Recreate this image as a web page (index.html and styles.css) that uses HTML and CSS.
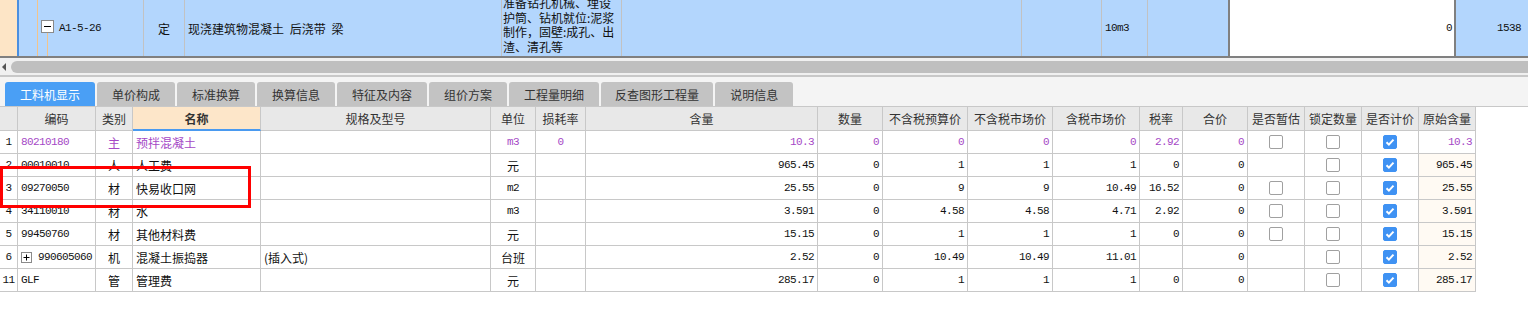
FILE: index.html
```html
<!DOCTYPE html>
<html lang="zh-CN">
<head>
<meta charset="utf-8">
<title>工料机显示</title>
<link rel="stylesheet" href="styles.css">
</head>
<body>
<div class="toprow">
  <div class="gutter"></div>
  <div class="tcell tcode">
    <span class="tree"><svg class="tbox" width="13" height="13" viewBox="0 0 13 13"><rect x="0.5" y="0.5" width="12" height="12" fill="#fff" stroke="#8a8a8a"/><path d="M3 6.5h7" stroke="#000"/></svg></span>
    <span class="mono">A1-5-26</span>
  </div>
  <div class="tcell ttype">定</div>
  <div class="tcell tname">现浇建筑物混凝土 后浇带 梁</div>
  <div class="tcell tdesc"><span>准备钻孔机械、埋设<br>护筒、钻机就位:泥浆<br>制作，固壁:成孔、出<br>渣、清孔等</span></div>
  <div class="tcell tblank1"></div>
  <div class="tcell tblank2"></div>
  <div class="tcell tunit mono">10m3</div>
  <div class="tcell tblank3"></div>
  <div class="tcell tedit mono">0</div>
  <div class="tcell tlast mono">1538</div>
</div>
<div class="hscroll">
  <span class="harrow"></span>
  <div class="htrack"></div>
</div>
<div class="tabbar">
  <div class="tab active">工料机显示</div>
  <div class="tab">单价构成</div>
  <div class="tab">标准换算</div>
  <div class="tab">换算信息</div>
  <div class="tab">特征及内容</div>
  <div class="tab">组价方案</div>
  <div class="tab">工程量明细</div>
  <div class="tab tab-long">反查图形工程量</div>
  <div class="tab">说明信息</div>
</div>
<div class="grid">
  <div class="grow ghead">
    <div></div><div>编码</div><div>类别</div><div class="sel">名称</div><div>规格及型号</div><div>单位</div><div>损耗率</div><div>含量</div><div>数量</div><div>不含税预算价</div><div>不含税市场价</div><div>含税市场价</div><div>税率</div><div>合价</div><div>是否暂估</div><div>锁定数量</div><div>是否计价</div><div>原始含量</div>
  </div>
  <div class="grow p">
    <div class="ctr mono num">1</div><div class="l mono">80210180</div><div class="ctr">主</div><div class="l">预拌混凝土</div><div class="l"></div><div class="ctr mono">m3</div><div class="ctr mono">0</div><div class="r mono">10.3</div><div class="r mono">0</div><div class="r mono">0</div><div class="r mono">0</div><div class="r mono">0</div><div class="r mono">2.92</div><div class="r mono">0</div><div class="ctr"><span class="cb"></span></div><div class="ctr"><span class="cb"></span></div><div class="ctr"><span class="cb on"><svg width="14" height="14" viewBox="0 0 14 14"><path d="M3.5 7.2l2.4 2.4 4.6-5" fill="none" stroke="#fff" stroke-width="2"/></svg></span></div><div class="r mono">10.3</div>
  </div>
  <div class="grow">
    <div class="ctr mono num">2</div><div class="l mono">00010010</div><div class="ctr">人</div><div class="l">人工费</div><div class="l"></div><div class="ctr">元</div><div></div><div class="r mono">965.45</div><div class="r mono">0</div><div class="r mono">1</div><div class="r mono">1</div><div class="r mono">1</div><div class="r mono">0</div><div class="r mono">0</div><div></div><div class="ctr"><span class="cb"></span></div><div class="ctr"><span class="cb on"><svg width="14" height="14" viewBox="0 0 14 14"><path d="M3.5 7.2l2.4 2.4 4.6-5" fill="none" stroke="#fff" stroke-width="2"/></svg></span></div><div class="r mono orig">965.45</div>
  </div>
  <div class="grow">
    <div class="ctr mono num">3</div><div class="l mono">09270050</div><div class="ctr">材</div><div class="l">快易收口网</div><div class="l"></div><div class="ctr mono">m2</div><div></div><div class="r mono">25.55</div><div class="r mono">0</div><div class="r mono">9</div><div class="r mono">9</div><div class="r mono">10.49</div><div class="r mono">16.52</div><div class="r mono">0</div><div class="ctr"><span class="cb"></span></div><div class="ctr"><span class="cb"></span></div><div class="ctr"><span class="cb on"><svg width="14" height="14" viewBox="0 0 14 14"><path d="M3.5 7.2l2.4 2.4 4.6-5" fill="none" stroke="#fff" stroke-width="2"/></svg></span></div><div class="r mono orig">25.55</div>
  </div>
  <div class="grow">
    <div class="ctr mono num">4</div><div class="l mono">34110010</div><div class="ctr">材</div><div class="l">水</div><div class="l"></div><div class="ctr mono">m3</div><div></div><div class="r mono">3.591</div><div class="r mono">0</div><div class="r mono">4.58</div><div class="r mono">4.58</div><div class="r mono">4.71</div><div class="r mono">2.92</div><div class="r mono">0</div><div class="ctr"><span class="cb"></span></div><div class="ctr"><span class="cb"></span></div><div class="ctr"><span class="cb on"><svg width="14" height="14" viewBox="0 0 14 14"><path d="M3.5 7.2l2.4 2.4 4.6-5" fill="none" stroke="#fff" stroke-width="2"/></svg></span></div><div class="r mono orig">3.591</div>
  </div>
  <div class="grow">
    <div class="ctr mono num">5</div><div class="l mono">99450760</div><div class="ctr">材</div><div class="l">其他材料费</div><div class="l"></div><div class="ctr">元</div><div></div><div class="r mono">15.15</div><div class="r mono">0</div><div class="r mono">1</div><div class="r mono">1</div><div class="r mono">1</div><div class="r mono">0</div><div class="r mono">0</div><div class="ctr"><span class="cb"></span></div><div class="ctr"><span class="cb"></span></div><div class="ctr"><span class="cb on"><svg width="14" height="14" viewBox="0 0 14 14"><path d="M3.5 7.2l2.4 2.4 4.6-5" fill="none" stroke="#fff" stroke-width="2"/></svg></span></div><div class="r mono orig">15.15</div>
  </div>
  <div class="grow">
    <div class="ctr mono num">6</div><div class="l mono"><svg class="pbox" width="11" height="11" viewBox="0 0 11 11"><rect x="0.5" y="0.5" width="10" height="10" fill="#fff" stroke="#8a8a8a"/><path d="M2.5 5.5h6M5.5 2.5v6" stroke="#000"/></svg>990605060</div><div class="ctr">机</div><div class="l">混凝土振捣器</div><div class="l">(插入式)</div><div class="ctr">台班</div><div></div><div class="r mono">2.52</div><div class="r mono">0</div><div class="r mono">10.49</div><div class="r mono">10.49</div><div class="r mono">11.01</div><div class="r mono"></div><div class="r mono">0</div><div></div><div class="ctr"><span class="cb"></span></div><div class="ctr"><span class="cb on"><svg width="14" height="14" viewBox="0 0 14 14"><path d="M3.5 7.2l2.4 2.4 4.6-5" fill="none" stroke="#fff" stroke-width="2"/></svg></span></div><div class="r mono orig">2.52</div>
  </div>
  <div class="grow">
    <div class="ctr mono num">11</div><div class="l mono">GLF</div><div class="ctr">管</div><div class="l">管理费</div><div class="l"></div><div class="ctr">元</div><div></div><div class="r mono">285.17</div><div class="r mono">0</div><div class="r mono">1</div><div class="r mono">1</div><div class="r mono">1</div><div class="r mono">0</div><div class="r mono">0</div><div></div><div class="ctr"><span class="cb"></span></div><div class="ctr"><span class="cb on"><svg width="14" height="14" viewBox="0 0 14 14"><path d="M3.5 7.2l2.4 2.4 4.6-5" fill="none" stroke="#fff" stroke-width="2"/></svg></span></div><div class="r mono orig">285.17</div>
  </div>
</div>
<div class="redbox"></div>
</body>
</html>
```
FILE: styles.css
```css
html, body {
  margin: 0;
  padding: 0;
}
body {
  width: 1528px;
  height: 309px;
  overflow: hidden;
  position: relative;
  background: #fff;
  color: #111;
  font-family: "Noto Sans CJK SC", "Noto Sans", sans-serif;
  font-size: 12px;
}
.mono {
  font-family: "Liberation Mono", "DejaVu Sans Mono", monospace;
  font-size: 11px;
  letter-spacing: -0.6px;
}

/* top (selected) row */
.toprow {
  display: flex;
  height: 56px;
  border-bottom: 2px solid #808080;
  background: #b3d6fd;
}
.gutter {
  width: 17px;
  flex: none;
  background: #fde5c6;
  border-right: 2px solid #4a8fe0;
}
.tcell {
  box-sizing: border-box;
  flex: none;
  display: flex;
  align-items: center;
  overflow: hidden;
  white-space: nowrap;
  border-right: 1px solid #c2c2c2;
}
.tcode { width: 125px; align-items: stretch; }
.tcode .mono { display: flex; align-items: center; }
.tree {
  position: relative;
  width: 40px;
  flex: none;
}
.tree::before {
  content: "";
  position: absolute;
  left: 18px;
  top: 0;
  bottom: 0;
  border-left: 1px solid #f3c48a;
}
.tree::after {
  content: "";
  position: absolute;
  left: 28px;
  top: 33px;
  bottom: 0;
  border-left: 1px solid #f3c48a;
}
.tbox {
  position: absolute;
  left: 22px;
  top: 20px;
}
.ttype { width: 41px; justify-content: center; }
.tname { width: 317px; padding-left: 3px; word-spacing: 3px; }
.tdesc {
  width: 120px;
  padding-left: 1px;
  line-height: 14.7px;
  white-space: normal;
  align-items: flex-start;
}
.tdesc span { margin-top: -4px; }
.tblank1 { width: 400px; }
.tblank2 { width: 80px; }
.tunit { width: 46px; padding-left: 3px; }
.tblank3 { width: 80px; border-right: none; }
.tedit {
  width: 228px;
  background: #fff;
  border-left: 2px solid #808080;
  border-right: 2px solid #808080;
  justify-content: flex-end;
  padding-right: 2px;
}
.tlast {
  flex: 1;
  border-right: none;
  justify-content: flex-end;
  padding-right: 7px;
}

/* horizontal scrollbar */
.hscroll {
  box-sizing: border-box;
  height: 19px;
  padding: 3px 0 2px 0;
  border-bottom: 2px solid #c8c8c8;
  background: #f0f0f0;
  display: flex;
  align-items: center;
}
.harrow {
  width: 0;
  height: 0;
  margin: 0 5px 0 2px;
  border-top: 4px solid transparent;
  border-bottom: 4px solid transparent;
  border-right: 4px solid #555;
}
.htrack {
  flex: 1;
  height: 12px;
  background: #bfbfbf;
  border-radius: 6px 0 0 6px;
}

/* tabs */
.tabbar {
  box-sizing: border-box;
  height: 30px;
  border-bottom: 1px solid #c8c8c8;
  background: #f4f4f4;
  display: flex;
  align-items: flex-end;
  gap: 2px;
  padding-left: 5px;
}
.tab {
  height: 24px;
  padding: 0 15px;
  background: #c3c3c3;
  color: #333;
  border-radius: 3px 3px 0 0;
  display: flex;
  align-items: center;
}
.tab-long { padding: 0 14px; }
.tab.active {
  background: #4a9ff5;
  color: #fff;
}

/* grid */
.grid { width: 1476px; }
.grow {
  display: grid;
  grid-template-columns: 18px 78px 37px 128px 230px 45px 50px 232px 65px 85px 85px 87px 43px 65px 57px 57px 57px 57px;
}
.grow > div {
  box-sizing: border-box;
  height: 23px;
  border-right: 1px solid #c8c8c8;
  border-bottom: 1px solid #c8c8c8;
  display: flex;
  align-items: center;
  overflow: hidden;
  white-space: nowrap;
}
.ghead > div {
  height: 24px;
  background: #e8e8e8;
  color: #333;
  justify-content: center;
}
.ghead > .sel {
  background: #fde6c9;
  font-weight: bold;
  border-bottom: 2px solid #4a9af0;
}
.l { padding-left: 3px; }
.r { justify-content: flex-end; padding-right: 3px; }
.ctr { justify-content: center; }
.p { color: #a548c6; }
.grow > .num { color: #111; }
.grow > .orig { background: #fffaf3; }
.pbox { margin: 0 6px 0 0; flex: none; }

.cb {
  box-sizing: border-box;
  width: 14px;
  height: 14px;
  border: 1px solid #a0a0a0;
  border-radius: 2px;
  background: #fff;
  display: flex;
}
.cb.on {
  background: #3f92f3;
  border-color: #3f92f3;
}
.cb.on svg { margin: -1px; }

.redbox {
  position: absolute;
  left: 0;
  top: 166px;
  width: 251px;
  height: 42px;
  box-sizing: border-box;
  border: 3px solid #ff0000;
}
```
